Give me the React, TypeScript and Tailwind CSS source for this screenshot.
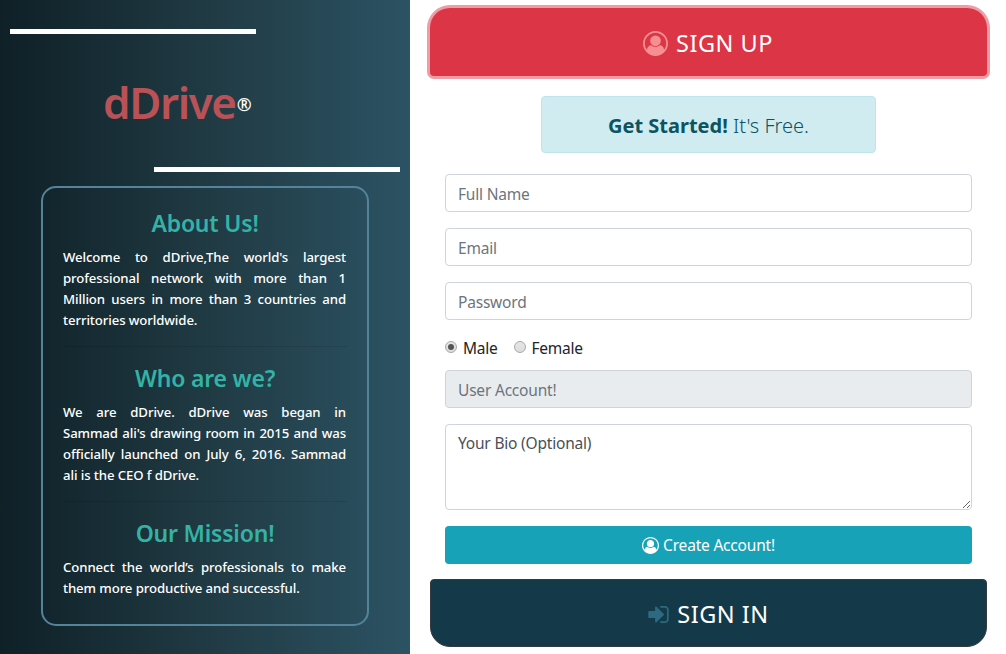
import type { ReactNode } from "react";

function UserCircle({ className }: { className: string }) {
  return (
    <svg viewBox="0 0 1792 1792" fill="currentColor" className={className}>
      <path d="M896 0q182 0 348 71t286 191 191 286 71 348q0 181-70.5 347t-190.5 286-286 191.5-349 71.5-349-71-285.5-191.5-190.5-286-71-347.5 71-348 191-286 286-191 348-71zm619 1351q149-205 149-455 0-156-61-298t-164-245-245-164-298-61-298 61-245 164-164 245-61 298q0 250 149 455 66-327 306-327 131 128 313 128t313-128q240 0 306 327zm-235-647q0-159-112.5-271.5t-271.5-112.5-271.5 112.5-112.5 271.5 112.5 271.5 271.5 112.5 271.5-112.5 112.5-271.5z" />
    </svg>
  );
}

function SignInIcon({ className }: { className: string }) {
  return (
    <svg viewBox="128 256 1536 1280" fill="currentColor" className={className}>
      <path d="M1312 896q0 26-19 45l-544 544q-19 19-45 19t-45-19-19-45v-288H192q-26 0-45-19t-19-45V704q0-26 19-45t45-19h448V352q0-26 19-45t45-19 45 19l544 544q19 19 19 45zm352-352v704q0 119-84.5 203.5T1376 1536h-320q-13 0-22.5-9.5T1024 1504q0-4-1-20t-.5-26.5 3-23.5 10-19.5 20.5-6.5h320q66 0 113-47t47-113V544q0-66-47-113t-113-47h-312l-11.5-1-11.5-3-8-5.5-7-9-2-13.5q0-4-1-20t-.5-26.5 3-23.5 10-19.5 20.5-6.5h320q119 0 203.5 84.5T1664 544z" />
    </svg>
  );
}

function Section({ title, children }: { title: string; children: ReactNode }) {
  return (
    <section>
      <h4 className="mb-2 h-[29px] text-center text-[23px] leading-[29px] font-semibold tracking-[-0.2px] text-[#33b3a6]">
        {title}
      </h4>
      <p className="h-[84px] pt-px pr-px text-justify text-[13.2px] leading-[21px] font-medium tracking-[-0.1px] text-white">
        {children}
      </p>
    </section>
  );
}

function Divider() {
  return <hr className="mt-4 mb-[17px] h-px border-0 bg-black/10" />;
}

const field =
  "block w-full rounded border border-[#ced4da] px-3 text-[15.5px] tracking-[-0.2px] text-[#495057] placeholder:text-[#6c757d] placeholder:opacity-100 outline-none";

function Radio({ label, checked }: { label: string; checked?: boolean }) {
  return (
    <label className="flex items-center gap-[6px]">
      <input type="radio" name="gender" defaultChecked={checked} className="peer sr-only" />
      <span className="-mt-[2px] flex size-3 items-center justify-center rounded-full border border-[#a8a8a8] bg-linear-to-b from-[#e6e6e6] to-[#dcdcdc]">
        {checked && <span className="size-[6px] rounded-full bg-[#555]" />}
      </span>
      <span className="pt-[2px]">{label}</span>
    </label>
  );
}

export default function App() {
  return (
    <div className="flex h-[654px] w-[1006px] overflow-hidden bg-white font-['Noto_Sans','Open_Sans',sans-serif]">
      <aside className="flex h-full w-[410px] flex-col bg-linear-to-r from-[#0f2027] via-[#203a43] to-[#2c5364] px-[10px] pt-[29px]">
        <div className="h-[5px] w-[246px] bg-white" />
        <div className="flex h-[133px] items-center pt-[3px] pl-[93px]">
          <h1 className="text-[44px] leading-[60px] font-semibold tracking-[-1.4px] text-[#b85256]">dDrive</h1>
          <span className="mt-1 ml-[1px] text-[18px] font-semibold text-white">®</span>
        </div>
        <div className="h-[5px] w-[246px] self-end bg-white" />
        <div className="mt-[14px] ml-[31px] h-[440px] w-[328px] rounded-[15px] border-2 border-[#54839a] px-5 pt-[21px]">
          <Section title="About Us!">
            Welcome to dDrive,The world's largest professional network with more than 1 Million users in more than 3
            countries and territories worldwide.
          </Section>
          <Divider />
          <Section title="Who are we?">
            <span className="block [text-align-last:justify]">We are dDrive. dDrive was began in</span>
            Sammad ali's drawing room in 2015 and was officially launched on July 6, 2016. Sammad ali is the CEO f
            dDrive.
          </Section>
          <Divider />
          <Section title="Our Mission!">
            Connect the world’s professionals to make them more productive and successful.
          </Section>
        </div>
      </aside>

      <main className="ml-5 flex w-[557px] flex-col pt-2">
        <button className="flex h-[68px] shrink-0 items-center justify-center gap-2 rounded-t-[20px] rounded-b bg-[#dc3545] pt-[2px] pr-px text-[23.5px] tracking-[0.5px] text-white ring-3 ring-[#ee9ca5]">
          <UserCircle className="size-[25px] text-[#f58f91]" />
          <span className="pt-[2px]">SIGN UP</span>
        </button>

        <div className="mt-5 flex h-[57px] w-[335px] shrink-0 items-center justify-center self-center rounded border border-[#bee5eb] bg-[#d1ecf1] pt-[2px] text-[20px] text-[#0c5460]">
          <p>
            <strong className="font-bold">Get Started!</strong> <span className="font-light">It's Free.</span>
          </p>
        </div>

        <form className="mt-[21px] flex flex-col px-[15px]">
          <div className="flex flex-col gap-4">
            <input className={`${field} h-[38px] pt-[2px]`} placeholder="Full Name" />
            <input className={`${field} h-[38px] pt-[2px]`} placeholder="Email" />
            <input className={`${field} h-[38px] pt-[2px]`} placeholder="Password" />
          </div>
          <div className="mt-4 flex h-6 items-center gap-4 text-[15.5px] tracking-[-0.25px] text-[#212529]">
            <Radio label="Male" checked />
            <Radio label="Female" />
          </div>
          <input className={`${field} mt-[10px] h-[38px] bg-[#e9ecef] pt-[2px]`} placeholder="User Account!" disabled />
          <textarea
            className={`${field} mt-4 h-[86px] resize py-[6px] leading-6`}
            defaultValue="Your Bio (Optional)"
          />
          <button
            type="button"
            className="mt-4 flex h-[38px] items-center justify-center gap-1 rounded bg-[#17a2b8] text-[15.5px] tracking-[-0.2px] text-white"
          >
            <UserCircle className="size-[17px]" />
            <span className="pt-[2px]">Create Account!</span>
          </button>
        </form>

        <button className="mt-[15px] flex h-[68px] shrink-0 items-center justify-center gap-2 rounded-t rounded-b-[20px] border border-[#343a40] bg-[#143a4a] pt-[2px] text-[23.5px] tracking-[0.5px] text-white">
          <SignInIcon className="h-[17px] w-[21px] text-[#2c6a81]" />
          <span className="pt-[2px]">SIGN IN</span>
        </button>
      </main>
    </div>
  );
}
